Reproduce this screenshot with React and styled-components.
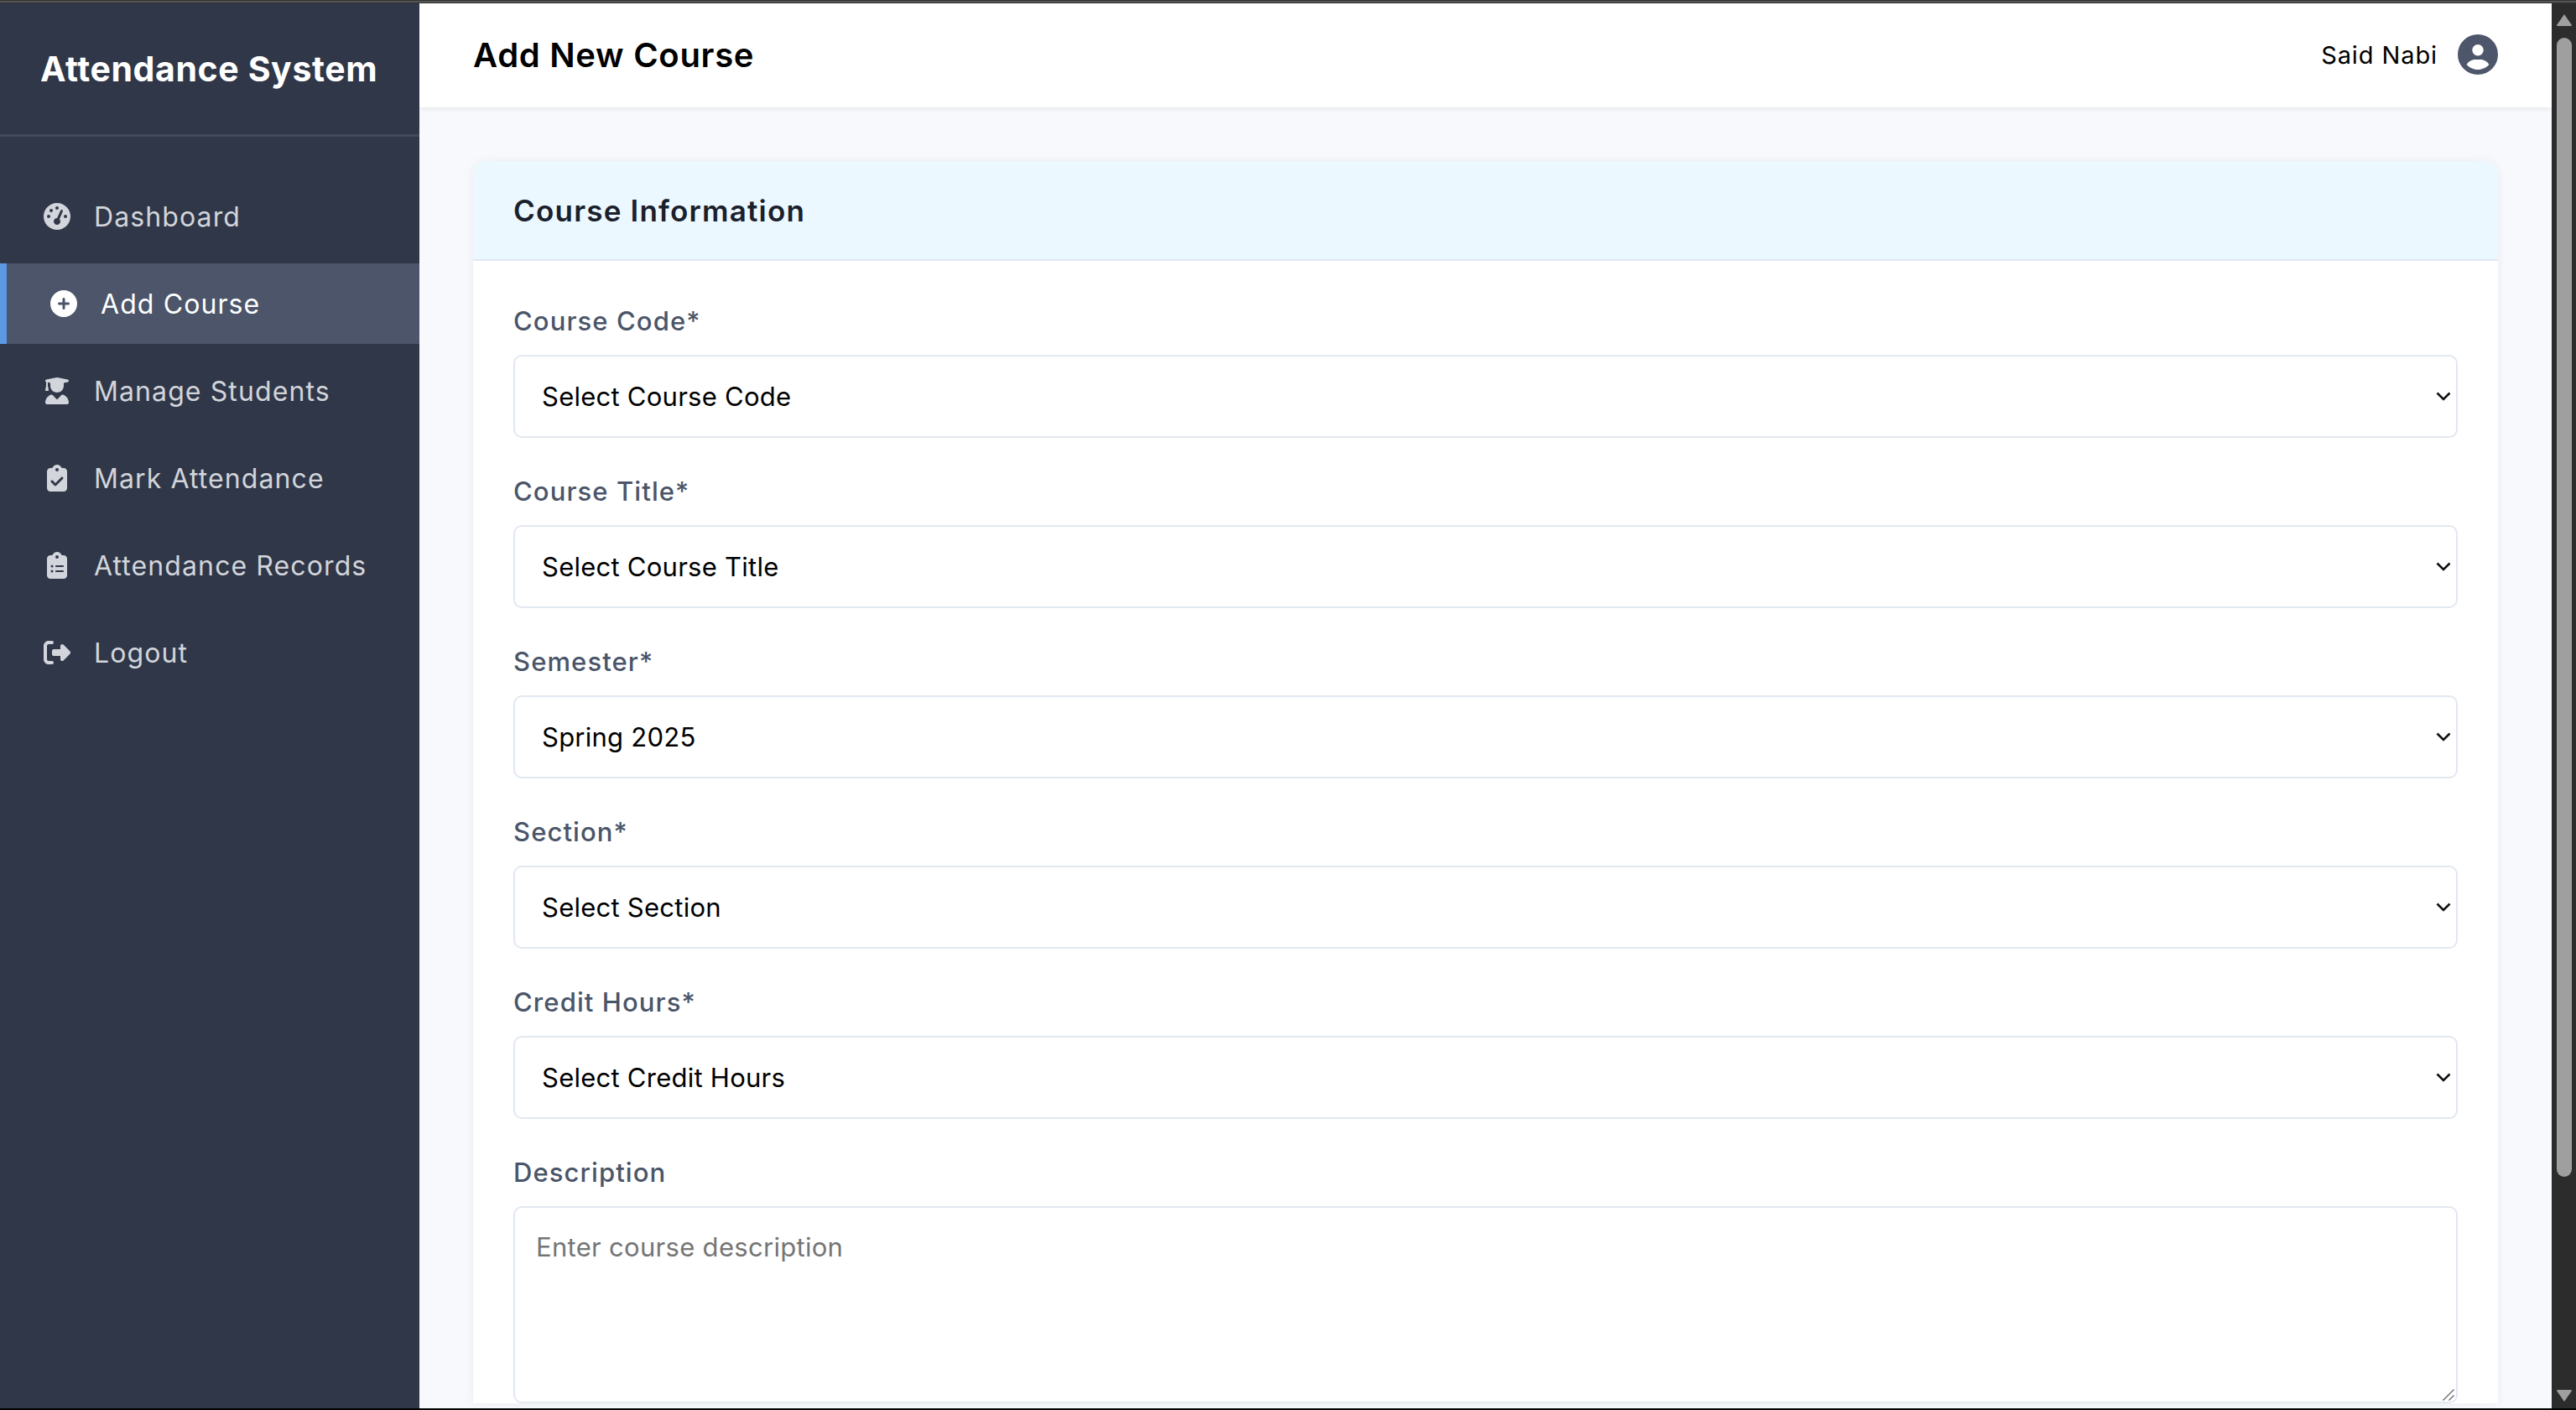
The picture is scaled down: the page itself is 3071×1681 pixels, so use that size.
import React from "react"
import styled, { createGlobalStyle } from "styled-components"
import {
  FaGaugeHigh,
  FaCirclePlus,
  FaUserGraduate,
  FaClipboardCheck,
  FaClipboardList,
  FaRightFromBracket,
  FaCircleUser,
} from "react-icons/fa6"

const GlobalStyle = createGlobalStyle`
  * { box-sizing: border-box; }
  html, body { margin: 0; height: 100%; overflow: hidden; }
  body { font-family: Inter, "Liberation Sans", sans-serif; background: #2c2c2c; }
`

const Frame = styled.div`
  display: flex;
  flex-direction: column;
  height: 100vh;
  background: #000;
`

const TopEdge = styled.div`
  flex: none;
  height: 4px;
  background: #555;
  border-top: 1px solid #333;
  border-bottom: 1px solid #333;
`

const BottomEdge = styled.div`
  flex: none;
  height: 2px;
  background: #000;
`

const Body = styled.div`
  flex: 1;
  min-height: 0;
  display: flex;
`

const Sidebar = styled.aside`
  flex: none;
  width: 500px;
  background: #303748;
`

const Brand = styled.div`
  height: 159px;
  padding: 53px 0 0 48px;
  border-bottom: 3px solid #434a5b;
  color: #fff;
  font-size: 41px;
  line-height: 50px;
  font-weight: 700;
  letter-spacing: 0.6px;
`

const Nav = styled.nav`
  display: flex;
  flex-direction: column;
  gap: 8px;
  padding-top: 47px;
`

const NavItem = styled.a`
  display: flex;
  align-items: center;
  height: 96px;
  padding-left: 52px;
  border-left: ${(p) => (p.$active ? "8px solid #5b99e3" : "none")};
  background: ${(p) => (p.$active ? "#4c5569" : "transparent")};
  color: ${(p) => (p.$active ? "#fff" : "#d2d5db")};
  font-size: 32px;
  font-weight: 400;
  letter-spacing: 1.1px;
  svg {
    flex: none;
    width: 32px;
    height: 32px;
    margin-right: 28px;
  }
`

const Main = styled.main`
  flex: 1;
  min-width: 0;
  overflow: hidden;
  background: #f8f9fc;
`

const Topbar = styled.header`
  position: relative;
  display: flex;
  align-items: center;
  justify-content: space-between;
  height: 124px;
  padding: 0 64px 2px 64px;
  background: #fff;
  box-shadow: 0 2px 6px rgba(0, 0, 0, 0.08);
`

const PageTitle = styled.h1`
  margin: 0;
  color: #000;
  font-size: 40px;
  font-weight: 600;
  letter-spacing: 0.7px;
`

const UserBox = styled.div`
  display: flex;
  align-items: center;
  gap: 24px;
  color: #000;
  font-size: 29px;
  letter-spacing: 0.9px;
  svg {
    width: 48px;
    height: 48px;
    color: #4d566b;
  }
`

const Content = styled.div`
  padding: 64px 64px 0 64px;
`

const Card = styled.section`
  background: #fff;
  border-radius: 16px 16px 0 0;
  box-shadow: 0 0 12px rgba(0, 0, 0, 0.06);
`

const CardHeader = styled.div`
  height: 119px;
  padding: 0 48px;
  display: flex;
  align-items: center;
  background: #ecf8ff;
  border-bottom: 2px solid #e2e8f2;
  border-radius: 16px 16px 0 0;
`

const CardTitle = styled.h2`
  margin: 0;
  color: #1a202c;
  font-size: 35px;
  font-weight: 600;
  letter-spacing: 1.2px;
`

const CardBody = styled.form`
  padding: 48px 48px 0;
`

const Field = styled.div`
  margin-bottom: 40px;
`

const Label = styled.label`
  display: block;
  height: 46px;
  margin-bottom: 18px;
  color: #4a5568;
  font-size: 31px;
  line-height: 47px;
  font-weight: 500;
  letter-spacing: 1.1px;
`

const ControlWrap = styled.div`
  position: relative;
`

const Select = styled.select`
  display: block;
  width: 100%;
  height: 99px;
  padding: 0 60px 0 32px;
  appearance: none;
  background: #fff;
  border: 2px solid #e2e8f0;
  border-radius: 10px;
  color: #000;
  font-family: inherit;
  font-size: 31px;
  letter-spacing: 0.25px;
`

const Chevron = styled.svg`
  position: absolute;
  top: 44px;
  right: 8px;
  width: 18px;
  height: 11px;
  pointer-events: none;
`

const TextArea = styled.textarea`
  display: block;
  width: 100%;
  height: 235px;
  padding: 24px 25px;
  background: #fff;
  border: 2px solid #e2e8f0;
  border-radius: 10px;
  color: #000;
  font-family: inherit;
  font-size: 31px;
  line-height: 46px;
  letter-spacing: 0.3px;
  resize: none;
  &::placeholder { color: #757575; }
`

const ResizeGrip = styled.svg`
  position: absolute;
  right: 4px;
  bottom: 3px;
  width: 14px;
  height: 14px;
  pointer-events: none;
`

const Scrollbar = styled.div`
  flex: none;
  width: 29px;
  display: flex;
  flex-direction: column;
  align-items: center;
  padding: 13px 0 8px;
  background: #2c2c2c;
`

const ScrollThumb = styled.div`
  flex: 1;
  width: 18px;
  margin: 14px 0 254px;
  background: #9f9f9f;
  border-radius: 9px;
`

const ScrollArrow = styled.svg`
  flex: none;
  width: 18px;
  height: 14px;
`

const navItems = [
  { label: "Dashboard", icon: FaGaugeHigh },
  { label: "Add Course", icon: FaCirclePlus, active: true },
  { label: "Manage Students", icon: FaUserGraduate },
  { label: "Mark Attendance", icon: FaClipboardCheck },
  { label: "Attendance Records", icon: FaClipboardList },
  { label: "Logout", icon: FaRightFromBracket },
]

const selects = [
  { label: "Course Code*", value: "Select Course Code" },
  { label: "Course Title*", value: "Select Course Title" },
  { label: "Semester*", value: "Spring 2025" },
  { label: "Section*", value: "Select Section" },
  { label: "Credit Hours*", value: "Select Credit Hours" },
]

export default function App() {
  return (
    <Frame>
      <GlobalStyle />
      <TopEdge />
      <Body>
        <Sidebar>
          <Brand>Attendance System</Brand>
          <Nav>
            {navItems.map((item) => (
              <NavItem key={item.label} $active={item.active}>
                <item.icon />
                {item.label}
              </NavItem>
            ))}
          </Nav>
        </Sidebar>
        <Main>
          <Topbar>
            <PageTitle>Add New Course</PageTitle>
            <UserBox>
              Said Nabi
              <FaCircleUser />
            </UserBox>
          </Topbar>
          <Content>
            <Card>
              <CardHeader>
                <CardTitle>Course Information</CardTitle>
              </CardHeader>
              <CardBody>
                {selects.map((s) => (
                  <Field key={s.label}>
                    <Label>{s.label}</Label>
                    <ControlWrap>
                      <Select defaultValue={s.value}>
                        <option>{s.value}</option>
                      </Select>
                      <Chevron viewBox="0 0 18 11">
                        <path d="M1.5 1.5 L9 9 L16.5 1.5" fill="none" stroke="#111" strokeWidth="2.6" />
                      </Chevron>
                    </ControlWrap>
                  </Field>
                ))}
                <Field>
                  <Label>Description</Label>
                  <ControlWrap>
                    <TextArea placeholder="Enter course description" />
                    <ResizeGrip viewBox="0 0 14 14">
                      <path d="M0.5 13.5 L13.5 0.5 M7.5 13.5 L13.5 7.5" fill="none" stroke="#666" strokeWidth="1.3" />
                    </ResizeGrip>
                  </ControlWrap>
                </Field>
              </CardBody>
            </Card>
          </Content>
        </Main>
        <Scrollbar>
          <ScrollArrow viewBox="0 0 18 14">
            <path d="M9 0 L18 13 Q18 14 17 14 L1 14 Q0 14 0 13 Z" fill="#9f9f9f" />
          </ScrollArrow>
          <ScrollThumb />
          <ScrollArrow viewBox="0 0 18 14">
            <path d="M9 14 L18 1 Q18 0 17 0 L1 0 Q0 0 0 1 Z" fill="#9f9f9f" />
          </ScrollArrow>
        </Scrollbar>
      </Body>
      <BottomEdge />
    </Frame>
  )
}
